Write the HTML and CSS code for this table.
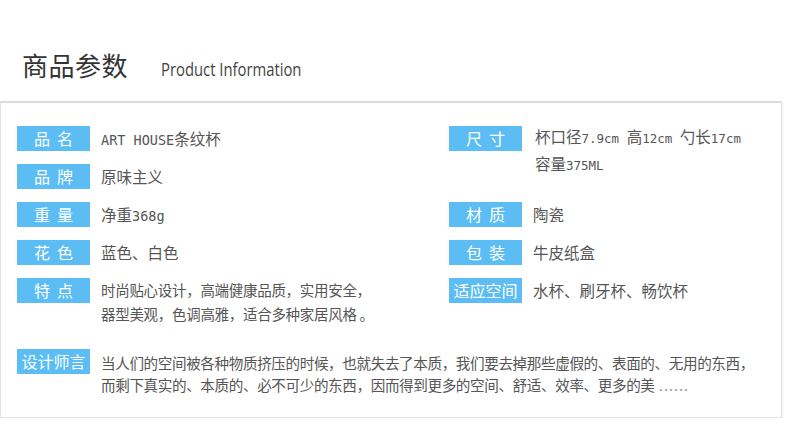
FILE: index.html
```html
<!DOCTYPE html>
<html lang="zh-CN">
<head>
  <meta charset="UTF-8" />
  <title>商品参数</title>
  <meta name="viewport" content="width=device-width, initial-scale=1.0" />
  <link rel="stylesheet" href="styles.css">
</head>
<body>
  <div class="head">
    <h1>商品参数</h1>
    <span class="en-title">Product Information</span>
  </div>

  <div class="panel">
    <div class="params">
      <div class="item">
        <span class="tag two">品名</span>
        <span class="val"><span class="mono">ART HOUSE</span>条纹杯</span>
      </div>
      <div class="item size">
        <span class="tag two">尺寸</span>
        <span class="val">杯口径<span class="mono">7.9cm </span>高<span class="mono">12cm </span>勺长<span class="mono">17cm</span><br>容量<span class="mono">375ML</span></span>
      </div>
      <div class="item">
        <span class="tag two">品牌</span>
        <span class="val">原味主义</span>
      </div>
      <div class="item">
        <span class="tag two">重量</span>
        <span class="val">净重<span class="mono">368g</span></span>
      </div>
      <div class="item">
        <span class="tag two">材质</span>
        <span class="val">陶瓷</span>
      </div>
      <div class="item">
        <span class="tag two">花色</span>
        <span class="val">蓝色、白色</span>
      </div>
      <div class="item">
        <span class="tag two">包装</span>
        <span class="val">牛皮纸盒</span>
      </div>
      <div class="item">
        <span class="tag two">特点</span>
        <span class="val lines">时尚贴心设计，高端健康品质，实用安全，<br>器型美观，色调高雅，适合多种家居风格 。</span>
      </div>
      <div class="item">
        <span class="tag">适应空间</span>
        <span class="val">水杯、刷牙杯、畅饮杯</span>
      </div>
    </div>

    <div class="item words">
      <span class="tag">设计师言</span>
      <span class="val">当人们的空间被各种物质挤压的时候，也就失去了本质，我们要去掉那些虚假的、表面的、无用的东西，<br>而剩下真实的、本质的、必不可少的东西，因而得到更多的空间、舒适、效率、更多的美<span class="dots"> ......</span></span>
    </div>
  </div>
</body>
</html>
```

FILE: styles.css
```css
body {
  margin: 0;
  background: #fff;
  font-family: "Noto Sans CJK SC", "Noto Sans", sans-serif;
  color: #555;
}
.head {
  display: flex;
  align-items: baseline;
  height: 101px;
  box-sizing: border-box;
  padding: 47px 0 0 22px;
}
h1 {
  margin: 0;
  font-size: 26px;
  font-weight: normal;
  color: #333;
  line-height: 36px;
  letter-spacing: 0.5px;
}
.en-title {
  display: inline-block;
  margin-left: 33px;
  font-family: "Open Sans", "Noto Sans", sans-serif;
  font-size: 19px;
  color: #444;
  transform: scaleX(0.78);
  transform-origin: left center;
}
.panel {
  width: 782px;
  box-sizing: border-box;
  border: 1px solid #e4e4e4;
  border-top: 2px solid #dcdcdc;
  box-shadow: 1px 1px 2px rgba(0, 0, 0, 0.06);
  padding: 23px 0 21px 16px;
}
.params {
  display: grid;
  grid-template-columns: 432px 1fr;
  grid-template-rows: 25px 25px 25px 25px auto;
  row-gap: 13px;
}
.item {
  display: flex;
  align-items: flex-start;
}
.size {
  grid-row: 1 / span 2;
  grid-column: 2;
}
.tag {
  flex: none;
  width: 73px;
  height: 25px;
  line-height: 25px;
  background: #5bbdf3;
  color: #fff;
  font-size: 16px;
  text-align: center;
  white-space: nowrap;
}
.tag.two {
  letter-spacing: 7px;
  text-indent: 7px;
}
.val {
  margin-left: 11px;
  font-size: 15.5px;
  line-height: 25px;
  white-space: nowrap;
}
.size .val {
  margin-left: 13px;
  margin-top: -2px;
  line-height: 25px;
}
.lines {
  font-size: 14.5px;
  letter-spacing: -0.3px;
  line-height: 24px;
}
.mono {
  font-family: "DejaVu Sans Mono", "Liberation Mono", monospace;
  font-size: 13.5px;
}
.size .mono {
  font-size: 12.5px;
}
.words {
  margin-top: 23px;
}
.words .val {
  margin-top: 3px;
  font-size: 14.6px;
  letter-spacing: -0.4px;
  line-height: 22px;
}
.dots {
  color: #999;
  letter-spacing: 1px;
}
```
